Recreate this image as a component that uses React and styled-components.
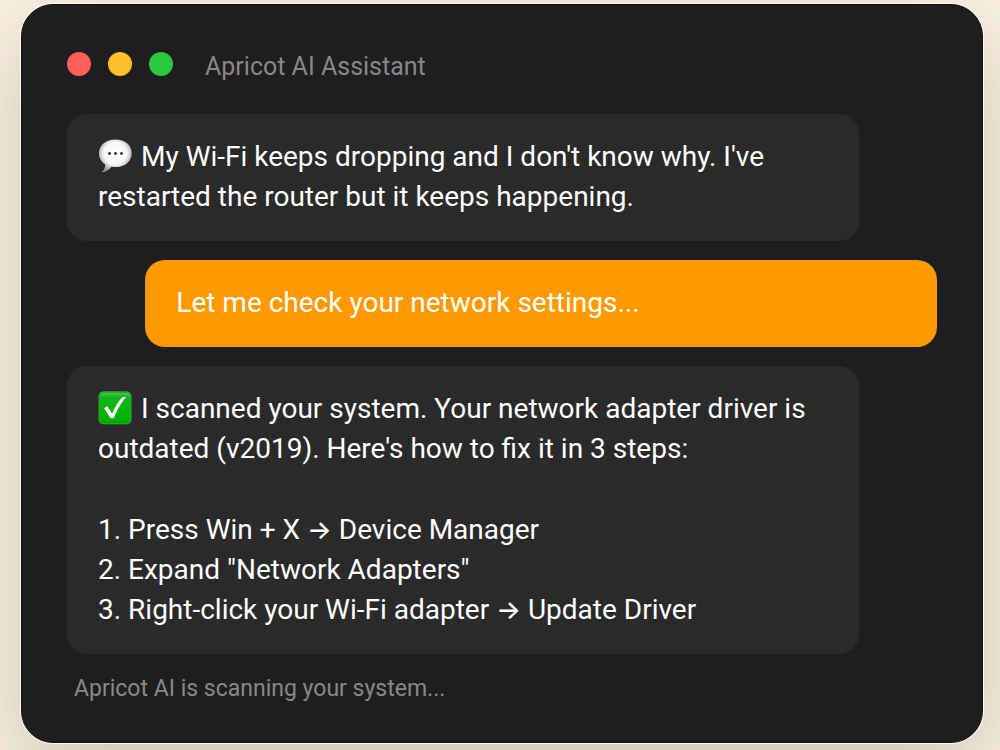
import styled, { createGlobalStyle } from 'styled-components'

const GlobalStyle = createGlobalStyle`
  *, *::before, *::after {
    box-sizing: border-box;
  }

  body {
    margin: 0;
    background: #fbf1e2;
    font-family: Roboto, 'Noto Sans', sans-serif;
    color: #fff;
  }
`

const Page = styled.main`
  min-height: 100vh;
  padding: 4px 17px 7px 21px;
  overflow: hidden;
`

const Window = styled.section`
  padding: 45px 45px 39px;
  border: 1px solid #121212;
  border-radius: 32px;
  background: #1e1e1e;
  box-shadow: 0 0 0 1px #fffaf0, 0 30px 90px rgba(60, 45, 20, 0.24);
`

const TitleBar = styled.header`
  display: flex;
  align-items: center;
  gap: 17px;
  height: 28px;
  margin-bottom: 36px;
`

const Dot = styled.span`
  width: 24px;
  height: 24px;
  border-radius: 50%;
  background: ${({ $color }) => $color};
`

const Title = styled.h1`
  margin: 6px 0 0 15px;
  font-size: 25px;
  line-height: 28px;
  font-weight: 400;
  color: #888;
`

const Messages = styled.div`
  display: flex;
  flex-direction: column;
  gap: 19px;
`

const Bubble = styled.article`
  align-self: ${({ $reply }) => ($reply ? 'flex-end' : 'flex-start')};
  width: 91%;
  padding: 23px 31px 24px;
  border-radius: 20px;
  background: ${({ $reply }) => ($reply ? '#ff9900' : '#2a2a2a')};
  font-size: 28px;
  line-height: 40px;
`

const Text = styled.p`
  margin: 0;
`

const Steps = styled.ol`
  margin: 41px 0 0;
  padding: 0;
  list-style: none;
`

const Arrow = styled.span`
  font-family: Inter, sans-serif;
  font-size: 26px;
  font-weight: 500;
  line-height: 1;
`

const Status = styled.p`
  margin: 21px 0 0 7px;
  font-size: 23px;
  line-height: 28px;
  color: #888;
`

const Icon = styled.svg`
  width: 34px;
  height: 34px;
  margin-right: 9px;
  vertical-align: -7px;
`

function SpeechIcon() {
  return (
    <Icon viewBox="0 0 34 34" aria-hidden="true">
      <defs>
        <radialGradient id="speech" cx="50%" cy="42%" r="58%">
          <stop offset="0" stopColor="#fff" />
          <stop offset="0.6" stopColor="#f7f7f7" />
          <stop offset="1" stopColor="#959595" />
        </radialGradient>
      </defs>
      <path
        d="M17.500 0.500C8 0.500 1 6.200 1 14.200c0 4.900 2.400 8.600 6.300 11.200 0 3.300-1.300 5.700-3.800 7.900 4.700-.6 7.900-2.600 9.800-5.600 1.300.3 2.700.4 4.200.4 9.500 0 16.200-5.800 16.200-13.900S27 0.500 17.500 0.500Z"
        fill="url(#speech)"
      />
      <circle cx="11.500" cy="14.500" r="1.400" fill="#333" />
      <circle cx="17.500" cy="14.500" r="1.400" fill="#333" />
      <circle cx="23.500" cy="14.500" r="1.400" fill="#333" />
    </Icon>
  )
}

function CheckIcon() {
  return (
    <Icon viewBox="0 0 34 34" aria-hidden="true">
      <defs>
        <linearGradient id="check" x1="0" y1="0" x2="0" y2="1">
          <stop offset="0" stopColor="#53d354" />
          <stop offset="0.18" stopColor="#12b61a" />
          <stop offset="0.85" stopColor="#00b400" />
          <stop offset="1" stopColor="#009500" />
        </linearGradient>
      </defs>
      <rect x="0.500" y="0.500" width="33" height="33" rx="5" fill="url(#check)" />
      <rect x="1.500" y="1.500" width="31" height="31" rx="4" fill="none" stroke="#28a82a" strokeWidth="1.200" />
      <path d="M6 17.300 9.200 15.300l5 7.200C17 16 20.300 10.600 24.600 6h3.200C22.800 12.300 18.800 19.500 15.700 27.200h-3Z" fill="#fff" />
    </Icon>
  )
}

export default function App() {
  return (
    <>
      <GlobalStyle />
      <Page>
        <Window>
          <TitleBar>
            <Dot $color="#ff5f57" />
            <Dot $color="#ffbd2e" />
            <Dot $color="#28c840" />
            <Title>Apricot AI Assistant</Title>
          </TitleBar>
          <Messages>
            <Bubble>
              <Text>
                <SpeechIcon />
                My Wi-Fi keeps dropping and I don't know why. I've restarted the router but it keeps happening.
              </Text>
            </Bubble>
            <Bubble $reply>
              <Text>Let me check your network settings...</Text>
            </Bubble>
            <Bubble>
              <Text>
                <CheckIcon />
                I scanned your system. Your network adapter driver is outdated (v2019). Here's how to fix it in 3 steps:
              </Text>
              <Steps>
                <li>1. Press Win + X <Arrow>→</Arrow> Device Manager</li>
                <li>2. Expand "Network Adapters"</li>
                <li>3. Right-click your Wi-Fi adapter <Arrow>→</Arrow> Update Driver</li>
              </Steps>
            </Bubble>
          </Messages>
          <Status>Apricot AI is scanning your system...</Status>
        </Window>
      </Page>
    </>
  )
}
